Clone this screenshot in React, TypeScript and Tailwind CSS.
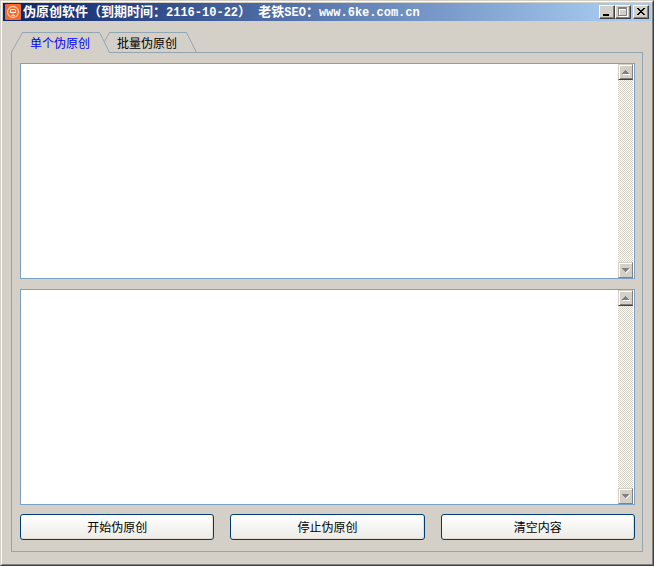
import { useState } from 'react';
import type { ReactNode } from 'react';
import clsx from 'clsx';

const TABS = ['单个伪原创', '批量伪原创'];

const CAPTION_BUTTON =
  'flex h-[14px] w-4 items-center justify-center border border-t-white border-l-white border-r-[#404040] border-b-[#404040] bg-[#d4d0c8] shadow-[inset_-1px_-1px_0_#808080]';

function AppIcon() {
  return (
    <svg className="h-4 w-4 shrink-0" viewBox="0 0 16 16" aria-hidden="true">
      <rect width="16" height="16" rx="1" fill="#f26b2d" />
      <circle cx="8" cy="8" r="5.5" fill="none" stroke="#fac3a6" strokeWidth="1.3" />
      <path d="M5.5 8.5V6.5Q5.5 5.5 6.5 5.5H9.5Q10.5 5.5 10.5 6.5V8.5z" fill="none" stroke="#fff0e8" strokeWidth="1.1" />
      <path d="M8 9v2.5M6 11.5h4" fill="none" stroke="#fbcdb5" strokeWidth="1" />
    </svg>
  );
}

function TitleBar() {
  return (
    <header className="flex h-[18px] items-center bg-linear-to-r/srgb from-[#0a246a] to-[#a6caf0] to-95% px-[2px]">
      <AppIcon />
      <h1 className="ml-[2px] flex-1 truncate pt-[2px] font-['Liberation_Mono','Noto_Sans_CJK_SC',monospace] text-[13px] leading-[18px] font-bold whitespace-pre text-white">
        伪原创软件（到期时间：<span className="text-[12px]">2116-10-22</span>）
        <span className="text-[12px]"> </span>老铁<span className="text-[12px]">SEO</span>：
        <span className="text-[12px]">www.6ke.com.cn</span>
      </h1>
      <div className="flex">
        <button type="button" aria-label="最小化" className={CAPTION_BUTTON}>
          <svg width="12" height="10" viewBox="0 0 12 10" shapeRendering="crispEdges">
            <path d="M2 7h6v2H2z" fill="#000" />
          </svg>
        </button>
        <button type="button" aria-label="最大化" disabled className={CAPTION_BUTTON}>
          <svg width="12" height="10" viewBox="0 0 12 10" shapeRendering="crispEdges">
            <path d="M2 1h9v9H2zM3 3v6h7V3z" fill="#fff" fillRule="evenodd" />
            <path d="M1 0h9v9H1zM2 2v6h7V2z" fill="#808080" fillRule="evenodd" />
          </svg>
        </button>
        <button type="button" aria-label="关闭" className={clsx(CAPTION_BUTTON, 'ml-[2px]')}>
          <svg width="12" height="10" viewBox="0 0 12 10" shapeRendering="crispEdges">
            <path
              d="M2 1h2v1h1v1h2V2h1V1h2v1H9v1H8v1H7v1h1v1h1v1h1v1H8V7H7V6H5v1H4v1H2V7h1V6h1V5h1V4H4V3H3V2H2z"
              fill="#000"
            />
          </svg>
        </button>
      </div>
    </header>
  );
}

function Tab({ label, active, first, onClick }: { label: string; active: boolean; first: boolean; onClick: () => void }) {
  return (
    <button
      type="button"
      role="tab"
      aria-selected={active}
      onClick={onClick}
      className={clsx(
        'relative h-[21px] w-[98px] pt-[3px] text-[12px] leading-[18px]',
        !first && '-ml-[11px]',
        active && 'z-20 text-[#0000ff]'
      )}
    >
      <svg className="absolute top-0 left-0" width="99" height="21" viewBox="0 0 99 21" aria-hidden="true">
        {active && <path d="M1 21V20L11 1H88L98 21z" fill="#d4d0c8" />}
        <path
          d={first || active ? 'M.5 21V20L11.5.5H88.5L98.5 20.5' : 'M6.5 9.5L11.5.5H88.5L98.5 20.5'}
          fill="none"
          stroke="#91a7b4"
        />
      </svg>
      <span className="relative">{label}</span>
    </button>
  );
}

function ScrollButton({ down, label }: { down?: boolean; label: string }) {
  return (
    <button
      type="button"
      aria-label={label}
      className={clsx(
        'flex h-4 w-full items-center justify-center border border-t-[#d4d0c8] border-l-[#d4d0c8] border-r-[#808080] bg-[#d4d0c8]',
        down
          ? 'border-b-[#808080] shadow-[inset_1px_1px_0_#fff]'
          : 'border-b-[#404040] shadow-[inset_1px_1px_0_#fff,inset_0_-1px_0_#808080]'
      )}
    >
      <svg width="10" height="6" viewBox="0 0 10 6" shapeRendering="crispEdges">
        {down ? (
          <>
            <path d="M2 2h7v1H8v1H7v1H6v1H5V5h1V4h1V3h1V2z" fill="#fff" />
            <path d="M1 1h7v1H7v1H6v1H5v1H4V4H3V3H2V2H1z" fill="#808080" />
          </>
        ) : (
          <>
            <path d="M2 5h7v1H2z" fill="#fff" />
            <path d="M4 1h1v1h1v1h1v1h1v1H1V4h1V3h1V2h1z" fill="#808080" />
          </>
        )}
      </svg>
    </button>
  );
}

function TextPane({ label }: { label: string }) {
  return (
    <div className="flex min-h-[100px] flex-1 border border-[#7ba2c4] bg-white pr-px">
      <textarea aria-label={label} className="min-w-0 flex-1 resize-none overflow-hidden p-1 text-[12px] outline-none" />
      <div className="flex w-[15px] flex-col justify-between bg-[conic-gradient(#fff_25%,#d4d0c8_0_50%,#fff_0_75%,#d4d0c8_0)] bg-[length:2px_2px]">
        <ScrollButton label="向上滚动" />
        <ScrollButton down label="向下滚动" />
      </div>
    </div>
  );
}

function ActionButton({ children }: { children: ReactNode }) {
  return (
    <button
      type="button"
      className="h-[26px] flex-1 rounded-[3px] border border-[#003c74] bg-linear-to-b from-white to-[#ecebe6] pt-px text-[12px] shadow-[inset_-1px_-1px_0_#e2ded6] active:to-[#d6d0c5]"
    >
      {children}
    </button>
  );
}

export default function App() {
  const [tab, setTab] = useState(0);

  return (
    <div className="flex min-h-screen flex-col border border-t-[#d4d0c8] border-r-[#404040] border-b-[#404040] border-l-[#d4d0c8] bg-[#d4d0c8] font-['Liberation_Sans','Noto_Sans_CJK_SC',sans-serif] text-black">
      <div className="flex flex-1 flex-col border border-t-white border-r-[#808080] border-b-[#808080] border-l-white p-px">
        <TitleBar />
        <main className="flex flex-1 flex-col px-2 py-[11px]">
          <div role="tablist" className="-mb-px flex">
            {TABS.map((label, i) => (
              <Tab key={label} label={label} first={i === 0} active={tab === i} onClick={() => setTab(i)} />
            ))}
          </div>
          <section role="tabpanel" className="flex flex-1 flex-col gap-[9px] border border-[#91a7b4] pt-[10px] pr-[7px] pb-[11px] pl-2">
            <div className="flex flex-1 flex-col gap-[10px]">
              <TextPane label="原文" />
              <TextPane label="伪原创结果" />
            </div>
            <div className="flex gap-4">
              <ActionButton>开始伪原创</ActionButton>
              <ActionButton>停止伪原创</ActionButton>
              <ActionButton>清空内容</ActionButton>
            </div>
          </section>
        </main>
      </div>
    </div>
  );
}
